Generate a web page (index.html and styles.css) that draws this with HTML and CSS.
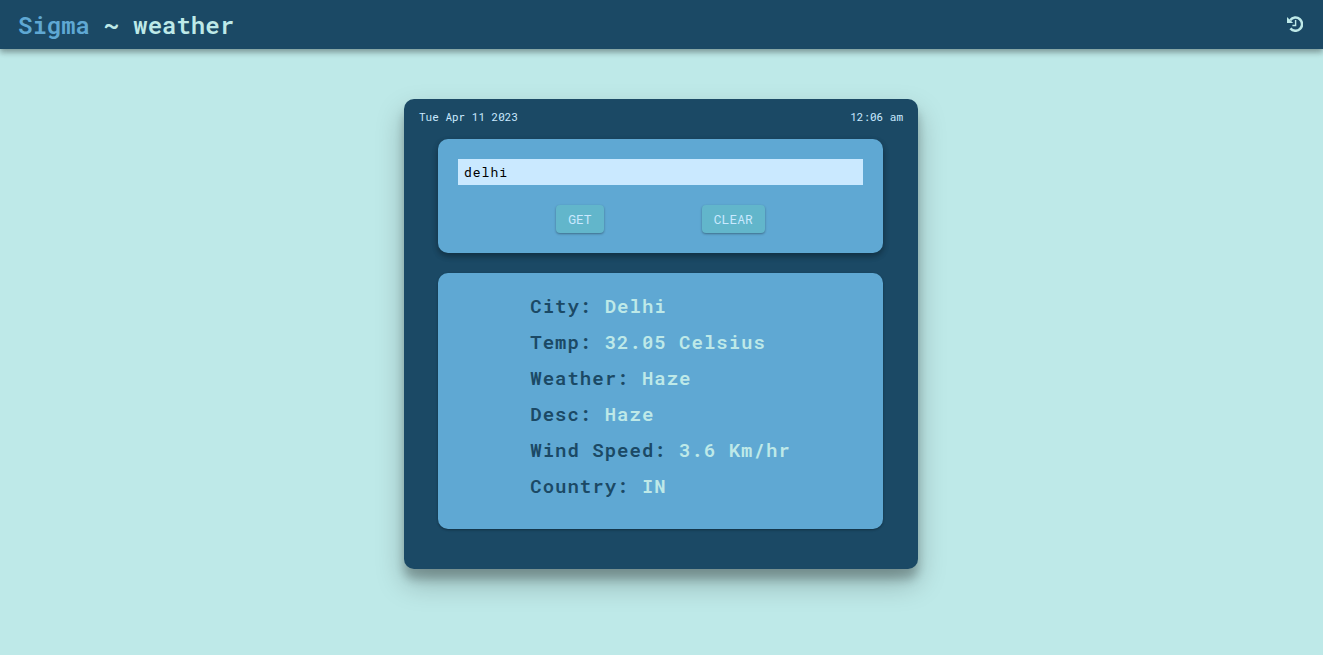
FILE: index.html
```html
<!DOCTYPE html>
<html lang="en">
<head>
<meta charset="utf-8">
<meta name="viewport" content="width=device-width, initial-scale=1">
<title>Sigma ~ weather</title>
<link rel="stylesheet" href="styles.css">
</head>
<body>
<header class="navbar">
  <h1 class="brand"><span class="brand-name">Sigma</span> ~ weather</h1>
  <button class="history" type="button" aria-label="History">
    <svg class="history-icon" viewBox="0 0 16 16" aria-hidden="true">
      <path class="ring" d="M3.2 4.2A6.6 6.6 0 1 1 3.4 12.4"/>
      <path class="arrow" d="M0 1V7H6.2Z"/>
      <path class="hands" d="M8.6 4V9.5H5.4"/>
    </svg>
  </button>
</header>
<main class="page">
  <section class="card">
    <div class="stamp"><span>Tue Apr 11 2023</span><span>12:06 am</span></div>
    <form class="panel search">
      <input class="city-input" type="text" value="delhi" aria-label="City">
      <div class="actions">
        <button class="btn" type="button">GET</button>
        <button class="btn" type="button">CLEAR</button>
      </div>
    </form>
    <div class="panel result">
      <dl class="facts">
        <div><dt>City:</dt> <dd>Delhi</dd></div>
        <div><dt>Temp:</dt> <dd>32.05 Celsius</dd></div>
        <div><dt>Weather:</dt> <dd>Haze</dd></div>
        <div><dt>Desc:</dt> <dd>Haze</dd></div>
        <div><dt>Wind Speed:</dt> <dd>3.6 Km/hr</dd></div>
        <div><dt>Country:</dt> <dd>IN</dd></div>
      </dl>
    </div>
  </section>
</main>
</body>
</html>
```
FILE: styles.css
```css
:root {
  --navy: #1b4965;
  --mint: #bee9e8;
  --blue: #5fa8d3;
  --teal: #62b6cb;
  --ice: #cae9ff;
}

* {
  box-sizing: border-box;
}

body {
  margin: 0;
  min-height: 100vh;
  background: var(--mint);
  font-family: "Roboto Mono", "DejaVu Sans Mono", monospace;
}

button,
input {
  font-family: inherit;
}

.navbar {
  display: flex;
  align-items: center;
  justify-content: space-between;
  padding: 8px 20px 7px 18px;
  background: var(--navy);
  color: var(--mint);
  box-shadow: 0 3px 6px rgba(0, 0, 0, .16), 0 3px 6px rgba(0, 0, 0, .23);
}

.brand {
  margin: 0;
  font-size: 24px;
  line-height: 34px;
  font-weight: 600;
}

.brand-name {
  color: var(--blue);
}

.history {
  display: flex;
  padding: 0 0 2px;
  border: 0;
  background: none;
  color: inherit;
  cursor: pointer;
}

.history-icon {
  width: 16px;
  height: 16px;
}

.ring,
.hands {
  fill: none;
  stroke: currentColor;
}

.ring {
  stroke-width: 2.5;
}

.hands {
  stroke-width: 1.4;
}

.arrow {
  fill: currentColor;
}

.page {
  display: flex;
  justify-content: center;
  padding: 50px 17px 50px 16px;
}

.card {
  width: 100%;
  max-width: 514px;
  padding-bottom: 40px;
  border-radius: 10px;
  background: var(--navy);
  box-shadow: 0 14px 28px rgba(0, 0, 0, .25), 0 10px 10px rgba(0, 0, 0, .22);
}

.stamp {
  display: flex;
  justify-content: space-between;
  padding: 10px 15px 14px;
  color: var(--ice);
  font-size: 11px;
  line-height: 16px;
}

.panel {
  margin: 0 35px 20px 34px;
  border-radius: 10px;
  background: var(--blue);
}

.search {
  padding: 20px;
  box-shadow: 0 3px 6px rgba(0, 0, 0, .16), 0 3px 6px rgba(0, 0, 0, .23);
}

.city-input {
  display: block;
  width: 100%;
  height: 26px;
  padding: 0 6px;
  border: 0;
  border-radius: 0;
  outline: 0;
  background: var(--ice);
  color: #000;
  font-size: 13px;
  letter-spacing: 1px;
}

.actions {
  display: flex;
  justify-content: space-evenly;
  margin-top: 20px;
}

.btn {
  padding: 6px 12px;
  border: 0;
  border-radius: 4px;
  background: var(--teal);
  color: var(--ice);
  font-size: 13px;
  line-height: 16px;
  box-shadow: 0 1px 3px rgba(0, 0, 0, .12), 0 1px 2px rgba(0, 0, 0, .24);
  cursor: pointer;
}

.result {
  display: flex;
  justify-content: center;
  margin-bottom: 0;
  padding: 15px 20px 25px;
  box-shadow: 0 1px 3px rgba(0, 0, 0, .12), 0 1px 2px rgba(0, 0, 0, .24);
}

.facts {
  margin: 0;
  font-size: 19px;
  line-height: 36px;
  font-weight: 600;
  letter-spacing: 1px;
}

.facts dt,
.facts dd {
  display: inline;
  margin: 0;
}

.facts dt {
  color: var(--navy);
}

.facts dd {
  color: var(--mint);
}
```
